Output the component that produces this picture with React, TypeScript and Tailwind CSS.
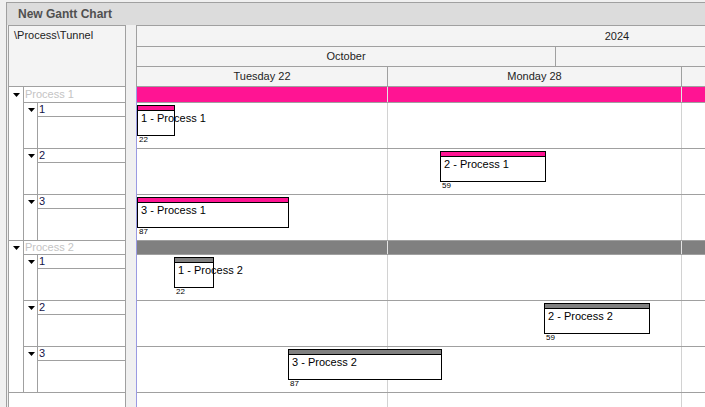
import React from "react";

const Tri = () => (
  <svg width="7" height="4" viewBox="0 0 7 4" className="block">
    <polygon points="0,0 7,0 3.5,4" fill="#000" />
  </svg>
);

type Task = { id: string; left: number; width: number; label: string };
type Group = { name: string; color: string; first: boolean; tasks: Task[] };

const groups: Group[] = [
  {
    name: "Process 1",
    color: "#ff1493",
    first: true,
    tasks: [
      { id: "1", left: 0, width: 38, label: "22" },
      { id: "2", left: 303, width: 106, label: "59" },
      { id: "3", left: 0, width: 152, label: "87" },
    ],
  },
  {
    name: "Process 2",
    color: "#808080",
    first: false,
    tasks: [
      { id: "1", left: 37, width: 40, label: "22" },
      { id: "2", left: 407, width: 106, label: "59" },
      { id: "3", left: 151, width: 154, label: "87" },
    ],
  },
];

function Bar({ task, color, name }: { task: Task; color: string; name: string }) {
  return (
    <div className="absolute top-[2px] flex flex-col" style={{ left: task.left, width: task.width }}>
      <div className="h-[31px] border border-black bg-white flex flex-col">
        <div className="h-[5px] border-b border-black" style={{ background: color }} />
        <div className="pl-[3px] pt-[1px] text-[11px] leading-[13px] whitespace-nowrap text-black">
          {task.id} - {name}
        </div>
      </div>
      <div className="pl-[2px] text-[8px] leading-[8px] text-black">{task.label}</div>
    </div>
  );
}

function Cells({ bg }: { bg?: string }) {
  return (
    <>
      <div className={`w-[251px] shrink-0 border-r ${bg ? "border-[#e4e4e4]" : "border-[#d2d2d2]"}`} style={bg ? { background: bg } : undefined} />
      <div className={`w-[294px] shrink-0 border-r ${bg ? "border-[#e4e4e4]" : "border-[#d2d2d2]"}`} style={bg ? { background: bg } : undefined} />
      <div className="flex-1" style={bg ? { background: bg } : undefined} />
    </>
  );
}

export default function App() {
  return (
    <div className="w-[705px] h-[407px] overflow-hidden bg-[#f0f0f0] font-['Liberation_Sans',Arial,sans-serif]">
      <div className="ml-[6px] mt-[2px] h-[405px] border-l border-t border-[#a0a0a0] flex flex-col">
        <div className="h-[22px] shrink-0 bg-[#dcdcdc] pl-[11px] flex items-center text-[12px] font-bold text-[#505050]">
          New Gantt Chart
        </div>
        <div className="flex-1 flex pl-[1px] gap-[10px] min-h-0">
          {/* Left panel */}
          <div className="w-[118px] shrink-0 border-l border-t border-r border-[#a0a0a0] flex flex-col bg-white">
            <div className="h-[61px] shrink-0 border-b border-[#a0a0a0] bg-[#f4f4f4] pl-[5px] pt-[3px] text-[11px] leading-[13px] text-[#222]">
              \Process\Tunnel
            </div>
            {groups.map((g) => (
              <div key={g.name} className="flex border-b border-[#a0a0a0]">
                <div className={`w-[15px] shrink-0 border-r border-[#a0a0a0] pl-[4px] ${g.first ? "pt-[6px]" : "pt-[5px]"}`}>
                  <Tri />
                </div>
                <div className="flex-1 flex flex-col">
                  <div className={`${g.first ? "h-[16px] leading-[15px]" : "h-[14px] leading-[13px]"} border-b border-[#a0a0a0] pl-[1px] text-[11px] text-[#c4c4c4]`}>
                    {g.name}
                  </div>
                  {g.tasks.map((t, i) => (
                    <div
                      key={t.id}
                      className={`flex ${i < g.tasks.length - 1 ? "h-[46px] border-b border-[#a0a0a0]" : "h-[45px]"}`}
                    >
                      <div className="w-[14px] shrink-0 border-r border-[#a0a0a0] pl-[4px] pt-[5px]">
                        <Tri />
                      </div>
                      <div className="flex-1 flex flex-col">
                        <div className="h-[14px] border-b border-[#a0a0a0] pl-[1px] text-[11px] leading-[12px] text-[#14144a]">
                          {t.id}
                        </div>
                        <div className="flex-1" />
                      </div>
                    </div>
                  ))}
                </div>
              </div>
            ))}
            <div className="flex-1" />
          </div>

          {/* Right panel */}
          <div className="flex-1 min-w-0 border-t border-[#a0a0a0] flex flex-col overflow-hidden">
            <div className="border-l border-[#a0a0a0] bg-[#f4f4f4] text-[11px] text-[#1e1e1e] shrink-0">
              <div className="h-[21px] border-b border-[#a0a0a0] flex">
                <div className="w-[960px] shrink-0 text-center leading-[20px]">2024</div>
              </div>
              <div className="h-[20px] border-b border-[#a0a0a0] flex">
                <div className="w-[419px] shrink-0 border-r border-[#a0a0a0] text-center leading-[19px]">October</div>
                <div className="flex-1" />
              </div>
              <div className="h-[20px] border-b border-[#a0a0a0] flex">
                <div className="w-[251px] shrink-0 border-r border-[#a0a0a0] text-center leading-[19px]">Tuesday 22</div>
                <div className="w-[294px] shrink-0 border-r border-[#a0a0a0] text-center leading-[19px]">Monday 28</div>
                <div className="flex-1" />
              </div>
            </div>
            <div className="flex-1 flex flex-col border-l border-[#9a9ae2] bg-white">
              {groups.map((g) => (
                <React.Fragment key={g.name}>
                  <div className={`${g.first ? "h-[16px]" : "h-[14px]"} flex border-b border-[#a0a0a0]`}>
                    <Cells bg={g.color} />
                  </div>
                  {g.tasks.map((t) => (
                    <div key={t.id} className="relative h-[46px] flex border-b border-[#a0a0a0]">
                      <Cells />
                      <Bar task={t} color={g.color} name={g.name} />
                    </div>
                  ))}
                </React.Fragment>
              ))}
              <div className="flex-1 flex">
                <Cells />
              </div>
            </div>
          </div>
        </div>
      </div>
    </div>
  );
}
